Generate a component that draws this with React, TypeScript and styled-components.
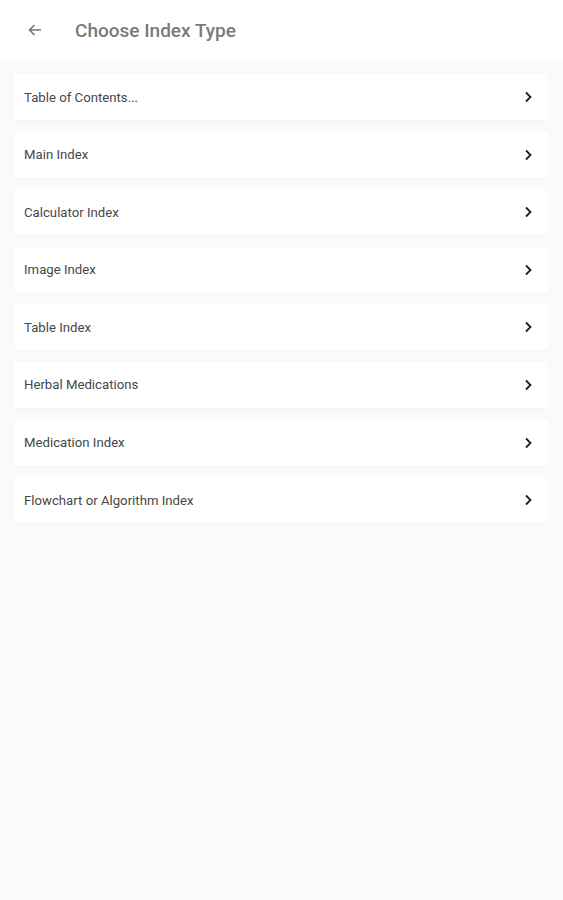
import React from "react";
import styled, { createGlobalStyle } from "styled-components";

const GlobalStyle = createGlobalStyle`
  html, body {
    margin: 0;
    padding: 0;
    background: #fafafa;
    font-family: Roboto, "Liberation Sans", Arial, sans-serif;
  }
`;

const Page = styled.div`
  min-height: 900px;
  display: flex;
  flex-direction: column;
  background: #fafafa;
`;

const Header = styled.header`
  height: 60px;
  background: #ffffff;
  display: flex;
  align-items: center;
  padding-left: 26px;
  box-sizing: border-box;
`;

const BackButton = styled.button`
  width: 18px;
  height: 18px;
  padding: 0;
  border: none;
  background: none;
  display: flex;
  align-items: center;
  justify-content: center;
  margin-right: 31px;
  cursor: pointer;
`;

const Title = styled.h1`
  margin: 0;
  font-size: 19px;
  font-weight: 500;
  color: #7a7a7a;
`;

const List = styled.main`
  display: flex;
  flex-direction: column;
  gap: 11.6px;
  padding: 14px 15px 0 14px;
`;

const Item = styled.div`
  height: 46px;
  background: #ffffff;
  border-radius: 3px;
  box-shadow: 0 1px 3px rgba(0, 0, 0, 0.03);
  display: flex;
  align-items: center;
  justify-content: space-between;
  padding: 0 15px 0 10px;
  cursor: pointer;
`;

const Label = styled.span`
  font-size: 13.2px;
  color: #474747;
`;

const items = [
  "Table of Contents...",
  "Main Index",
  "Calculator Index",
  "Image Index",
  "Table Index",
  "Herbal Medications",
  "Medication Index",
  "Flowchart or Algorithm Index",
];

const Chevron = () => (
  <svg width="10" height="12" viewBox="0 0 10 12">
    <path d="M3 1.5 L7.5 6 L3 10.5" fill="none" stroke="#1e1e1e" strokeWidth="1.8" />
  </svg>
);

const App = () => {
  return (
    <Page>
      <GlobalStyle />
      <Header>
        <BackButton>
          <svg width="18" height="18" viewBox="0 0 18 18">
            <path
              d="M15 9 H3.5 M8.5 4 L3.5 9 L8.5 14"
              fill="none"
              stroke="#757575"
              strokeWidth="1.6"
            />
          </svg>
        </BackButton>
        <Title>Choose Index Type</Title>
      </Header>
      <List>
        {items.map(label => (
          <Item key={label}>
            <Label>{label}</Label>
            <Chevron />
          </Item>
        ))}
      </List>
    </Page>
  );
};

export default App;
